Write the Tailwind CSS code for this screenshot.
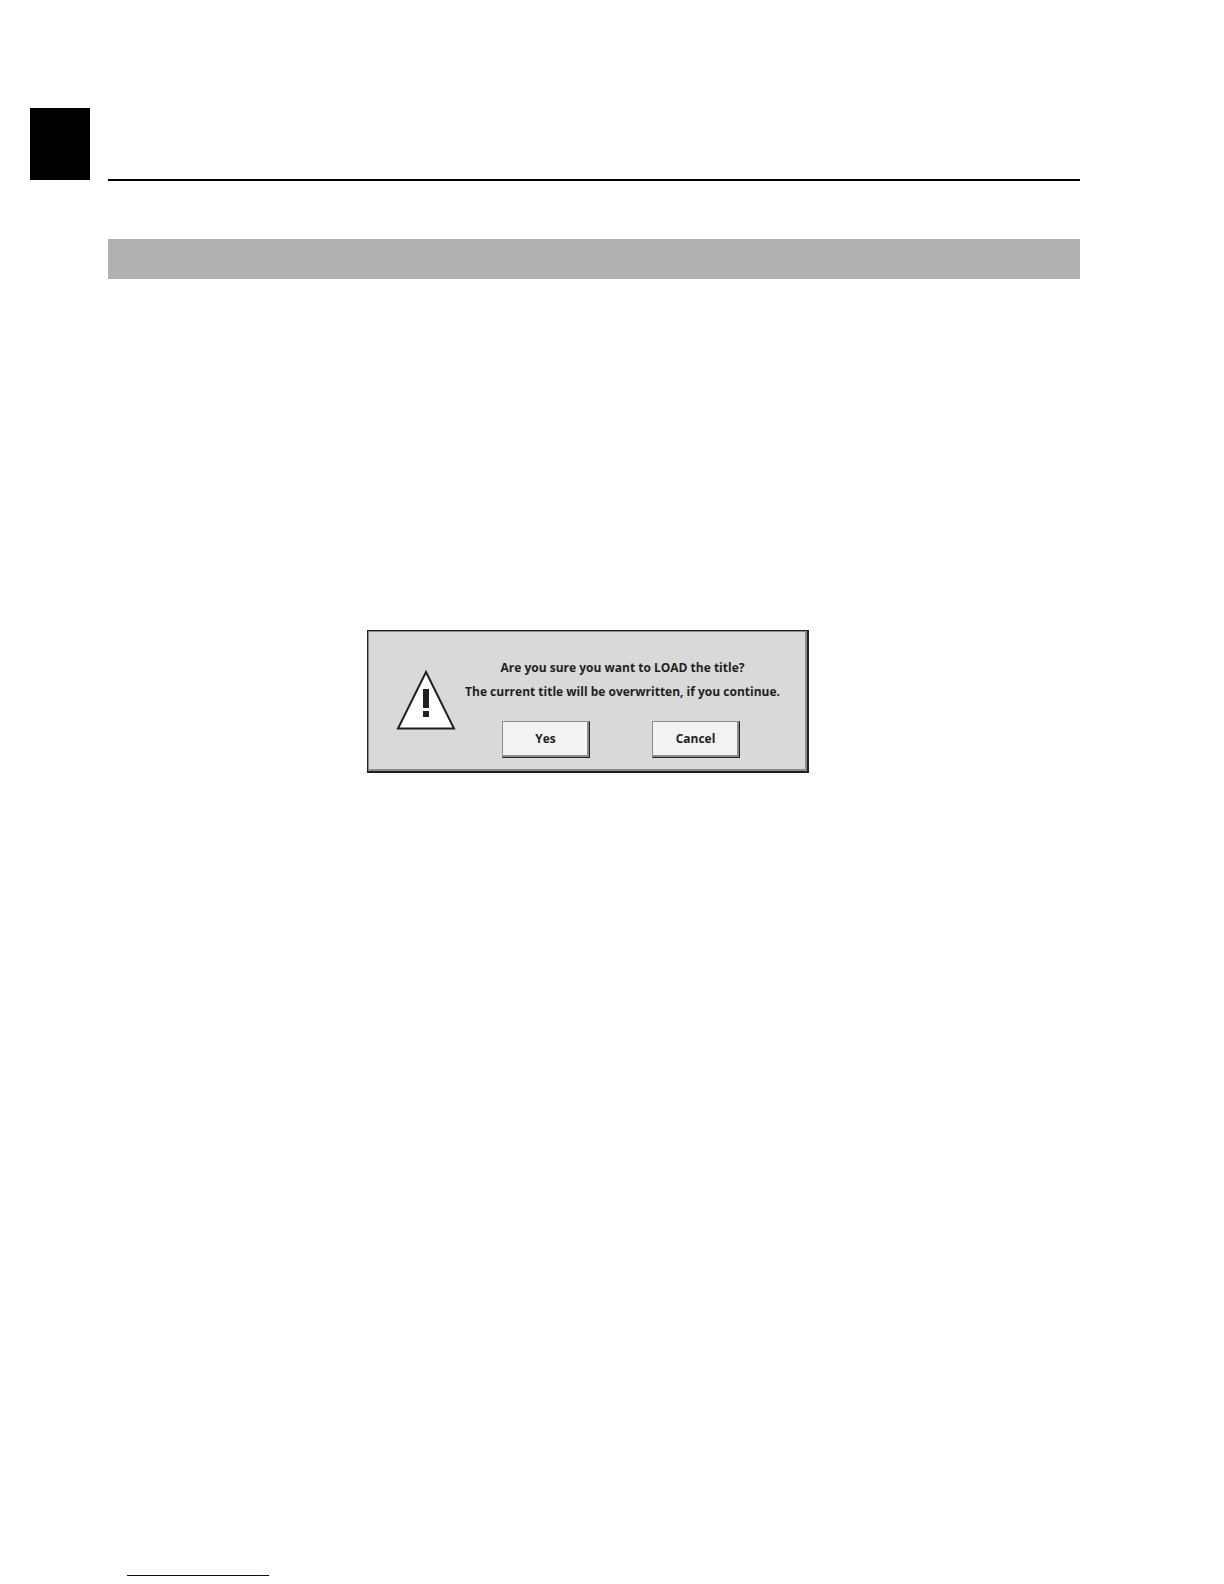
<!DOCTYPE html>
<html lang="en">
<head>
<meta charset="utf-8">
<meta name="viewport" content="width=device-width, initial-scale=1">
<title>Load title</title>
<script src="https://cdn.jsdelivr.net/npm/@tailwindcss/browser@4"></script>
</head>
<body class="bg-white">
<div class="flex min-h-screen flex-col pr-36 pl-[30px]">
  <header class="flex items-end gap-[18px] pt-[108px]">
    <div class="h-[72px] w-[60px] shrink-0 bg-black"></div>
    <div class="-mb-px h-0.5 flex-1 bg-black"></div>
  </header>
  <main class="pl-[78px]">
    <div class="mt-[59px] h-10 bg-[#b1b1b1]"></div>
    <section role="alertdialog" aria-labelledby="question" aria-describedby="warning" class="mt-[351px] ml-[259px] w-[442px] border-t border-r-2 border-b-2 border-l border-[#231f20] font-['Open_Sans',sans-serif] text-[12px] font-bold text-[#231f20]">
      <div class="flex border-t border-r-2 border-b-2 border-l border-[#8c8c8c] bg-[#d9d9d9] pt-6 pr-5 pb-[11px] pl-[27px]">
        <svg class="mt-[14px] h-[60px] w-[60px] shrink-0" viewBox="0 0 60 60" aria-hidden="true">
          <path d="M30 2 L58 58.5 H2 Z" fill="#fff" stroke="#231f20" stroke-width="2"/>
          <path d="M27 19h6v19h-6z M27 41h6v6h-6z" fill="#231f20"/>
        </svg>
        <div class="flex flex-1 flex-col items-center whitespace-nowrap">
          <div class="pl-1 text-center leading-6">
            <p id="question">Are you sure you want to LOAD the title?</p>
            <p id="warning">The current title will be overwritten, if you continue.</p>
          </div>
          <div class="mt-[17px] flex gap-[62px]">
            <button type="button" class="h-[37px] w-[88px] border-t border-r border-b border-l border-t-[#8c8c8c] border-r-[#231f20] border-b-[#231f20] border-l-[#8c8c8c] bg-[#f2f2f2] pb-0.5 shadow-[inset_-2px_-2px_0_#8c8c8c]">Yes</button>
            <button type="button" class="h-[37px] w-[88px] border-t border-r border-b border-l border-t-[#8c8c8c] border-r-[#231f20] border-b-[#231f20] border-l-[#8c8c8c] bg-[#f2f2f2] pb-0.5 shadow-[inset_-2px_-2px_0_#8c8c8c]">Cancel</button>
          </div>
        </div>
      </div>
    </section>
  </main>
  <footer class="mt-auto pb-2 pl-[97px]">
    <div class="h-px w-[142px] bg-[#000080]"></div>
  </footer>
</div>
</body>
</html>
